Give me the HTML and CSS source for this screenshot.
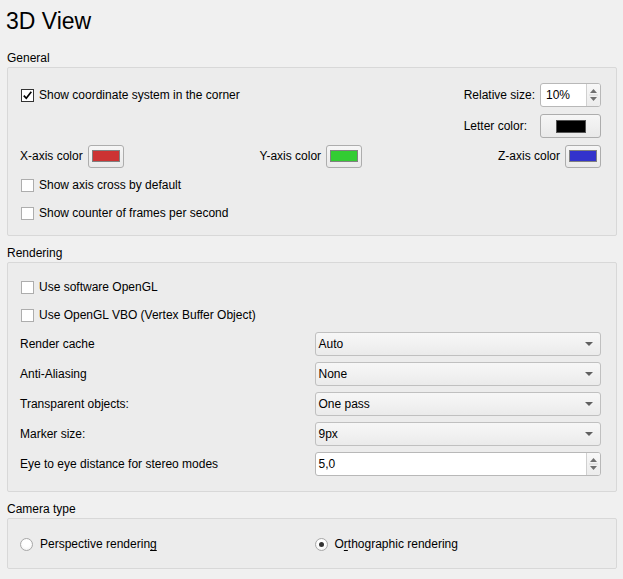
FILE: index.html
```html
<!DOCTYPE html>
<html>
<head>
<meta charset="utf-8">
<link rel="stylesheet" href="styles.css">
</head>
<body>
<h1 class="title">3D View</h1>

<section class="group">
  <div class="group-label">General</div>
  <div class="group-box general">
    <div class="top">
      <label class="check tall"><span class="cb checked"><svg width="11" height="11" viewBox="0 0 11 11"><path d="M1.8 5.6 L4.3 8.3 L9.3 1.8" fill="none" stroke="#000" stroke-width="1.7"/></svg></span><span>Show coordinate system in the corner</span></label>
      <div class="form">
        <span>Relative size:</span>
        <div class="spin">
          <span class="val">10%</span>
          <span class="arrows"><svg width="13" height="22" viewBox="0 0 13 22"><path d="M3 9 L6.5 5 L10 9 Z" fill="#707070"/><path d="M3 13 L6.5 17 L10 13 Z" fill="#707070"/><line x1="2" y1="11" x2="11" y2="11" stroke="#d6d6d6"/></svg></span>
        </div>
        <span>Letter color:</span>
        <button class="colorbtn wide"><span class="swatch black"></span></button>
      </div>
    </div>
    <div class="axes">
      <div class="axis"><span>X-axis color</span><button class="colorbtn"><span class="swatch red"></span></button></div>
      <div class="axis"><span>Y-axis color</span><button class="colorbtn"><span class="swatch green"></span></button></div>
      <div class="axis"><span>Z-axis color</span><button class="colorbtn"><span class="swatch blue"></span></button></div>
    </div>
    <label class="check"><span class="cb"></span><span>Show axis cross by default</span></label>
    <label class="check"><span class="cb"></span><span>Show counter of frames per second</span></label>
  </div>
</section>

<section class="group">
  <div class="group-label">Rendering</div>
  <div class="group-box rendering">
    <label class="check"><span class="cb"></span><span>Use software OpenGL</span></label>
    <label class="check"><span class="cb"></span><span>Use OpenGL VBO (Vertex Buffer Object)</span></label>
    <div class="form-row"><span>Render cache</span><div class="combo"><span>Auto</span><span class="caret"></span></div></div>
    <div class="form-row"><span>Anti-Aliasing</span><div class="combo"><span>None</span><span class="caret"></span></div></div>
    <div class="form-row"><span>Transparent objects:</span><div class="combo"><span>One pass</span><span class="caret"></span></div></div>
    <div class="form-row"><span>Marker size:</span><div class="combo"><span>9px</span><span class="caret"></span></div></div>
    <div class="form-row"><span>Eye to eye distance for stereo modes</span>
      <div class="spin full">
        <span class="val">5,0</span>
        <span class="arrows"><svg width="13" height="22" viewBox="0 0 13 22"><path d="M3 9 L6.5 5 L10 9 Z" fill="#707070"/><path d="M3 13 L6.5 17 L10 13 Z" fill="#707070"/><line x1="2" y1="11" x2="11" y2="11" stroke="#d6d6d6"/></svg></span>
      </div>
    </div>
  </div>
</section>

<section class="group">
  <div class="group-label">Camera type</div>
  <div class="group-box camera">
    <label class="radio"><span class="rb"></span><span>Perspective renderin<u>g</u></span></label>
    <label class="radio"><span class="rb on"></span><span>O<u>r</u>thographic rendering</span></label>
  </div>
</section>
</body>
</html>
```

FILE: styles.css
```css
* { box-sizing: border-box; }

body {
  margin: 0;
  padding: 0 6px 0 7px;
  background: #f0f0f0;
  font: 12px/16px "Liberation Sans", Arial, sans-serif;
  color: #000;
}

.title {
  margin: 6px 0 0 -1px;
  font-size: 23px;
  font-weight: normal;
  line-height: 30px;
  height: 30px;
}

.group { margin-top: 9px; }
.group:first-of-type { margin-top: 14px; }

.group-label {
  height: 16px;
  line-height: 16px;
  margin-bottom: 1px;
}

.group-box {
  border: 1px solid #d8d8d8;
  border-radius: 2px;
  background: #ececec;
}

/* General */
.general {
  display: flex;
  flex-direction: column;
  gap: 6px;
  padding: 15px 15px 11px 12px;
}

.top {
  display: flex;
  justify-content: space-between;
  align-items: flex-start;
}

.form {
  display: grid;
  grid-template-columns: auto 61px;
  column-gap: 5px;
  row-gap: 7px;
  align-items: center;
}

.axes {
  display: flex;
  justify-content: space-between;
  align-items: center;
  height: 24px;
}

.axis {
  display: flex;
  align-items: center;
  gap: 5px;
}

/* checkbox */
.check {
  display: flex;
  align-items: center;
  gap: 5px;
  height: 22px;
}
.check.tall { height: 24px; }

.cb {
  width: 13px;
  height: 13px;
  margin-left: 1px;
  border: 1px solid #adadad;
  background: #fff;
  display: flex;
  align-items: center;
  justify-content: center;
  flex: none;
}
.cb.checked { border-color: #333; }

/* radio */
.radio {
  display: flex;
  align-items: center;
  gap: 7px;
  height: 22px;
}
.rb {
  width: 13px;
  height: 13px;
  border-radius: 50%;
  border: 1px solid #a8a8a8;
  background: radial-gradient(circle at 50% 40%, #ffffff 40%, #ececec 100%);
  display: flex;
  align-items: center;
  justify-content: center;
  flex: none;
}
.rb.on::after {
  content: "";
  width: 5px;
  height: 5px;
  border-radius: 50%;
  background: #333;
}
.radio u { text-decoration-thickness: 1px; text-underline-offset: 2px; }

/* color buttons */
.colorbtn {
  width: 36px;
  height: 23px;
  padding: 0;
  border: 1px solid #adadad;
  border-radius: 3px;
  background: linear-gradient(#f6f6f6, #e9e9e9);
  display: flex;
  align-items: center;
  justify-content: center;
  font: inherit;
}
.colorbtn.wide { width: 61px; height: 24px; }

.swatch {
  width: 28px;
  height: 12px;
  border: 1px solid #808080;
}
.colorbtn.wide .swatch { width: 30px; height: 13px; }
.swatch.red { background: #cc3333; }
.swatch.green { background: #33cc33; }
.swatch.blue { background: #3333cc; }
.swatch.black { background: #000; border-color: #555; }

/* spin box */
.spin {
  height: 24px;
  border: 1px solid #b8b8b8;
  border-radius: 3px;
  background: #fff;
  display: flex;
  align-items: stretch;
  overflow: hidden;
}
.spin .val {
  flex: 1;
  padding-left: 5px;
  display: flex;
  align-items: center;
}
.spin .arrows {
  width: 14px;
  border-left: 1px solid #d0d0d0;
  background: linear-gradient(#f8f8f8, #ececec);
  display: flex;
  align-items: center;
  justify-content: center;
}
.spin.full .val { padding-left: 3px; }

/* rendering */
.rendering {
  display: flex;
  flex-direction: column;
  gap: 6px;
  padding: 13px 15px 15px 12px;
}

.form-row {
  display: grid;
  grid-template-columns: 1fr 1fr;
  column-gap: 8px;
  align-items: center;
  height: 24px;
}

.combo {
  height: 24px;
  border: 1px solid #c0c0c0;
  border-radius: 3px;
  background: linear-gradient(#f7f7f7, #ebebeb);
  display: flex;
  align-items: center;
  justify-content: space-between;
  padding: 0 7px 0 3px;
}
.caret {
  width: 0;
  height: 0;
  border-left: 4px solid transparent;
  border-right: 4px solid transparent;
  border-top: 4px solid #606060;
}

/* camera */
.camera {
  display: grid;
  grid-template-columns: 1fr 1fr;
  column-gap: 8px;
  padding: 14px 15px 13px 12px;
}
```
